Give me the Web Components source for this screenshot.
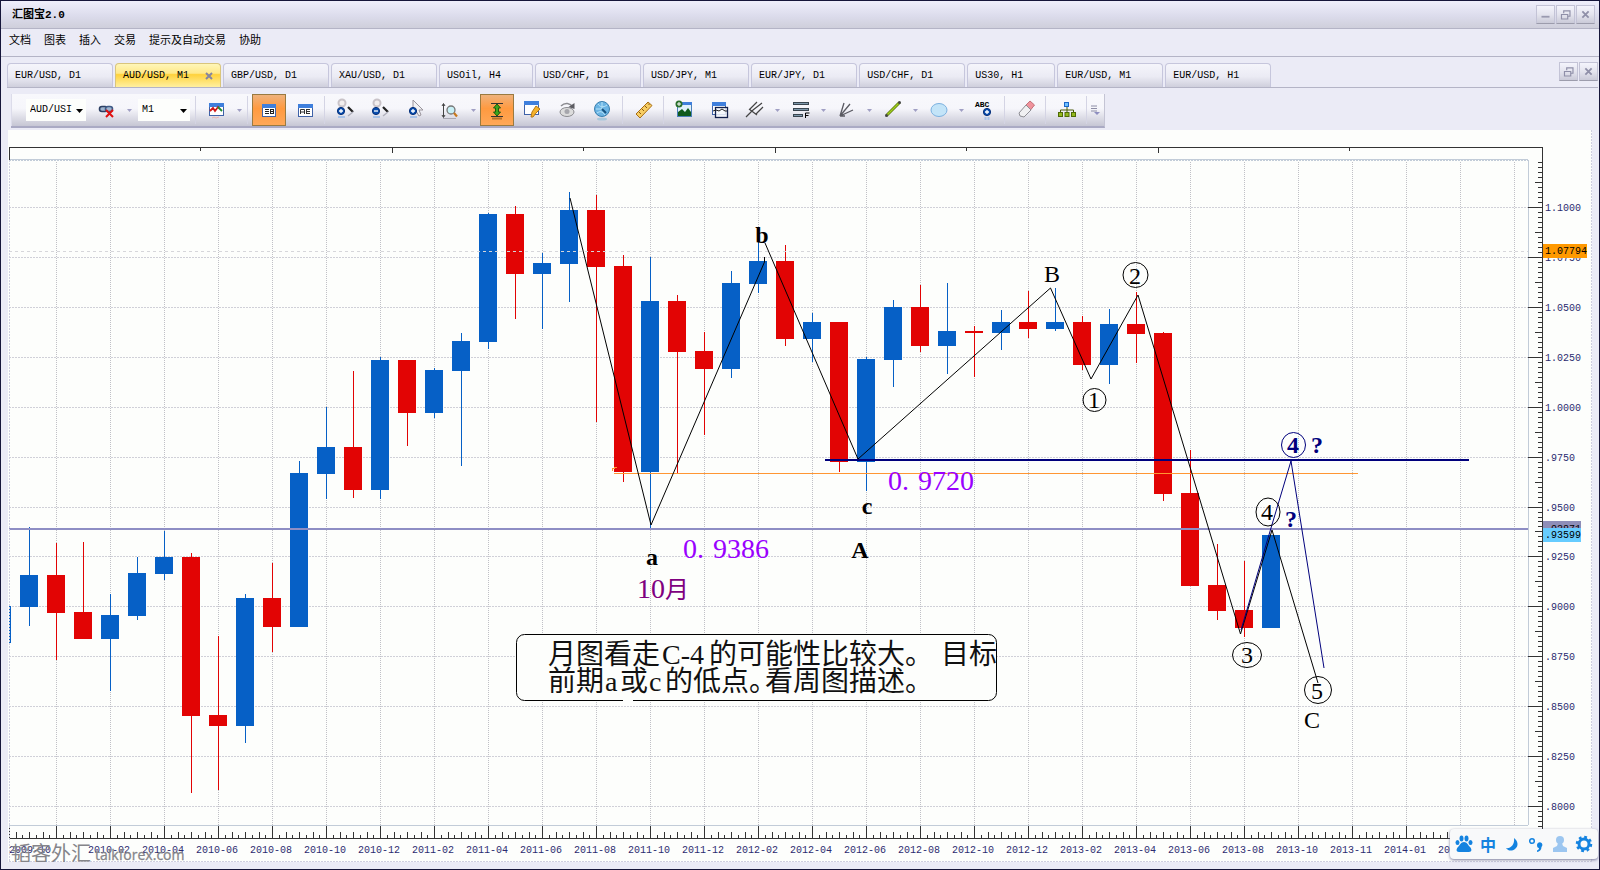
<!DOCTYPE html>
<html lang="zh-CN">
<head>
<meta charset="utf-8">
<title>汇图宝2.0</title>
<style>
  html, body { margin: 0; }
  body {
    font-family: "Liberation Mono", "Noto Sans CJK SC", monospace;
    font-size: 10px;
    color: #000;
    background: #ebebf6;
  }
</style>
</head>
<body>
<trading-app></trading-app>

<script>
/* ---------- helpers ---------- */
const define = (name, html, setup) => {
  const tpl = document.createElement('template');
  tpl.innerHTML = html;
  customElements.define(name, class extends HTMLElement {
    constructor() {
      super();
      this.attachShadow({ mode: 'open' }).append(tpl.content.cloneNode(true));
    }
    connectedCallback() { if (setup) setup.call(this, this.shadowRoot); }
  });
};

/* ---------- toolbar icons, 24 x 24 ---------- */
const win = (x, y, w, h) => `<rect x="${x}.5" y="${y}.5" width="${w}" height="${h}" fill="#fff" stroke="#3f62a8"/><rect x="${x}" y="${y}" width="${w + 1}" height="4" fill="#3f7fdc"/>`;
const plus = (x, y) => `<circle cx="${x}" cy="${y}" r="3.6" fill="#0a4fb0" stroke="#062f78"/><path d="M${x - 2} ${y}h4M${x} ${y - 2}v4" stroke="#fff" stroke-width="1.3"/>`;
const minus = (x, y) => `<circle cx="${x}" cy="${y}" r="3.6" fill="#0a4fb0" stroke="#062f78"/><path d="M${x - 2} ${y}h4" stroke="#fff" stroke-width="1.3"/>`;
const ICONS = {
  link: `<rect x="4.5" y="8.5" width="8" height="5" rx="2.5" fill="#9fb4cf" stroke="#2c3f63" stroke-width="1.6"/><rect x="10.500" y="8.500" width="7" height="5" rx="2.5" fill="#9fb4cf" stroke="#3f5a86" stroke-width="1.6"/><path d="M11 12l7 7M18 12l-7 7" stroke="#e01010" stroke-width="2"/>`,
  chart: win(4, 5, 14, 12) + `<path d="M5 13l3-3 2 3 3-4 1 1" fill="none" stroke="#d01818" stroke-width="1.8"/><path d="M13 9l4 4" stroke="#1f8a2e" stroke-width="1.8"/><path d="M7 20l2-1 2 1 3-1" fill="none" stroke="#e7b3b3"/>`,
  textRight: win(5, 6, 13, 12) + `<path d="M8 11.500h4M8 13.500h4M8 15.500h4" stroke="#222"/><path d="M13.500 11v5M13 11.500h3M13 13.500h3M13 15.500h3M16.500 11v5" stroke="#222"/>`,
  textLeft: win(5, 6, 14, 12) + `<path d="M7.500 16v-4.500h4v4.500M7.500 14h4M13 11.500h4M13 13.500h4M13 15.500h4M13.500 11v5" fill="none" stroke="#333"/>`,
  zoomIn: `<circle cx="8" cy="5" r="3.500" fill="#f2eeee" stroke="#c9c3c8" stroke-width="2"/><path d="M14 9l5 5" stroke="#222" stroke-width="2.2"/><path d="M19 14l-5 4" stroke="#b0b0bc" stroke-width="1.500"/>` + plus(7, 13) + `<path d="M4 19h7" stroke="#a9c3e8" stroke-width="2"/>`,
  zoomOut: `<circle cx="8" cy="5" r="3.500" fill="#f2eeee" stroke="#c9c3c8" stroke-width="2"/><path d="M14 9l5 5" stroke="#222" stroke-width="2.2"/><path d="M19 14l-5 4" stroke="#b0b0bc" stroke-width="1.500"/>` + minus(7, 13) + `<path d="M4 19h7" stroke="#a9c3e8" stroke-width="2"/>`,
  cursor: `<path d="M9 2v14l3-3 3 5 2-1-2-5h4z" fill="#f2f2f4" stroke="#99949c"/>` + plus(9, 13) + `<path d="M6 19h7" stroke="#a9c3e8" stroke-width="2"/>`,
  magnifyY: `<path d="M4.500 6v13M3 8l1.500-2.500L6 8M3 17l1.500 2.500L6 17" fill="none" stroke="#444"/><circle cx="12" cy="12" r="4" fill="#c8f0f6" stroke="#777" stroke-width="1.3"/><path d="M15 15l3 3.500" stroke="#c8791c" stroke-width="2.2"/><path d="M4 20.500h13" stroke="#a8a8b4"/>`,
  range: `<path d="M6 5.500h12M6 18.500h12" stroke="#333"/><path d="M12 6l3.500 4h-2v4h2l-3.500 4-3.500-4h2v-4h-2z" fill="#3da51c" stroke="#1e5b0c"/><path d="M7 20.500h10" stroke="#b4722c" stroke-width="2"/>`,
  brush: win(3, 3, 14, 13) + `<path d="M10 19l1-5 4-6 4 3-4 4-3 4z" fill="#f4b32c" stroke="#b87812"/>`,
  eye: `<ellipse cx="11" cy="14" rx="7" ry="4.500" fill="#dcdcdc" stroke="#8b8b90"/><circle cx="11" cy="13.500" r="2.500" fill="#a6a6ac"/><path d="M5 8c4-4 9-3 12 1" fill="none" stroke="#8b8b90" stroke-width="1.500"/><path d="M18.500 5v6l-6-2z" fill="#5d5d63"/>`,
  globe: `<circle cx="11" cy="11" r="7.500" fill="#6bb4e4" stroke="#3a7fae"/><path d="M11 4v7M5 11h6M7 6c2 3 5 4 9 1M6 15c3-2 5-2 8 2" stroke="#b9e4f8" fill="none"/><path d="M11 11l4 4" stroke="#17527f" stroke-width="2"/><ellipse cx="11" cy="21" rx="5" ry="1.500" fill="#a9c8dc"/>`,
  ruler: `<path d="M4 16L16 4l4 3.500L8 20z" fill="#f7cd63" stroke="#a86e14"/><path d="M7 14l2 2M10 11l2 2M13 8l2 2M16 5.500l1.500 1.500" stroke="#8a5a10"/>`,
  picture: `<rect x="4.500" y="5.500" width="14" height="13" fill="#dff0fb" stroke="#4a7fb8"/><path d="M4 5.500h15" stroke="#3f7fdc" stroke-width="3"/><path d="M5 18v-4l4-3 3 3 3-4 3 4v4z" fill="#0f5a1c"/><circle cx="6" cy="6" r="3.500" fill="#2a6f2c"/><path d="M4 6h4M6 4v4" stroke="#fff"/>`,
  windows: win(4, 4, 13, 12) + `<rect x="7.500" y="9.500" width="12" height="10" fill="#f4f7fc" fill-opacity=".85" stroke="#12204c" stroke-width="1.3"/><path d="M5 13l3-1 3 1 3-2 3 2h2" fill="none" stroke="#222"/>`,
  fork: `<path d="M3 19L10 12M6 11l8 6M7 11l7-7M10 12l9-7M13 16l7-7" fill="none" stroke="#444" stroke-width="1.200"/>`,
  fibo: `<path d="M4 5.500h16M4 11.500h16M4 17.500h10" stroke="#39454f" stroke-width="3"/><path d="M5 5.500h14M5 11.500h14M5 17.500h8" stroke="#7d98ab"/><path d="M16.500 20v-5h4M16.500 17.500h3" fill="none" stroke="#000"/>`,
  fan: `<path d="M5 18L9 5M5 18l10-12M5 18l13-6M5 18h5" stroke="#5a5a62" stroke-width="1.300" fill="none"/>`,
  line: `<path d="M5.500 17.500L18.500 4.500" stroke="#5a7a0c" stroke-width="3"/><path d="M5.500 17.500L18.500 4.500" stroke="#a2cf1c" stroke-width="1.4"/><circle cx="5.500" cy="17.500" r="1.500" fill="#444"/><circle cx="18.500" cy="4.500" r="1.500" fill="#444"/>`,
  ellipse: `<ellipse cx="12" cy="12" rx="8" ry="6.500" fill="#c3e4f8" stroke="#7bb1e0"/>`,
  label: `<text x="2" y="9" font-family="Liberation Mono, monospace" font-size="8" font-weight="700">ABC</text>` + plus(14, 14) + `<path d="M12.500 19v3M15.500 19v3" stroke="#a9c3e8" stroke-width="2"/>`,
  eraser: `<path d="M12 7l4-4 4.500 4-4 5z" fill="#f0929c" stroke="#c47078"/><path d="M12 7l-7 8 1 3 4 1 7-7z" fill="#f0f0f2" stroke="#8e8e94"/>`,
  tree: `<path d="M12 8v4M5.500 15v-3h13v3M12 12v3" stroke="#4a5a08" fill="none"/><rect x="9.500" y="4.500" width="4" height="4" fill="#6fc0ff" stroke="#1b66c8"/><rect x="3.500" y="14.500" width="4" height="4" fill="#93b81c" stroke="#4e6a06"/><rect x="10" y="14.500" width="4" height="4" fill="#93b81c" stroke="#4e6a06"/><rect x="16.500" y="14.500" width="4" height="4" fill="#93b81c" stroke="#4e6a06"/>`
};

/* ---------- window control ---------- */
const GLYPHS = {
  min: '<path d="M5 12h9" stroke="#9a9ab0" stroke-width="2"/>',
  restore: '<path d="M7.500 8V5.500h7v6H12M5 9.500h7v5H5z" fill="none" stroke="#8f8fa8" stroke-width="1.300"/>',
  close: '<path d="M6 6l7 7M13 6l-7 7" stroke="#8f8fa8" stroke-width="2"/>'
};
define('window-control', `
<style>
  :host { display: block; width: 19px; height: 19px; }
  button { display: block; width: 100%; height: 100%; padding: 0; border: 1px solid #c3c3d6; border-bottom-color: #9c9cac; background: linear-gradient(#f4f4fc, #e4e4ee 50%, #cacad8); }
  svg { display: block; width: 100%; height: 100%; }
</style>
<button type="button"><svg viewBox="0 0 19 19"></svg></button>`, function (root) {
  root.querySelector('svg').innerHTML = GLYPHS[this.getAttribute('kind')];
  root.querySelector('button').setAttribute('aria-label', this.getAttribute('label'));
});

/* ---------- title bar ---------- */
define('title-bar', `
<style>
  :host { display: flex; align-items: center; justify-content: space-between; height: 27px; padding: 0 4px 0 11px; border-bottom: 1px solid #b4b4c6; background: linear-gradient(#efeffb, #dcdcec 55%, #cfcfdb); }
  h1 { margin: 0; font-size: 11px; line-height: 16px; font-weight: 700; }
  div { display: flex; gap: 1px; }
</style>
<h1><slot></slot></h1>
<div>
  <window-control kind="min" label="最小化"></window-control>
  <window-control kind="restore" label="还原"></window-control>
  <window-control kind="close" label="关闭"></window-control>
</div>`);

/* ---------- menu bar ---------- */
define('menu-bar', `
<style>
  :host { display: block; border-bottom: 1px solid #b4b4c6; background: #ebebf6; }
  nav { display: flex; gap: 13px; height: 27px; padding: 0 8px 3px; box-sizing: border-box; align-items: center; }
  button { padding: 0; border: 0; background: none; font: 11px/16px "Liberation Mono", "Noto Sans CJK SC", monospace; color: #000; white-space: nowrap; }
</style>
<nav></nav>`, function (root) {
  root.querySelector('nav').innerHTML = this.getAttribute('items').split('|')
    .map(t => `<button type="button">${t}</button>`).join('');
});

/* ---------- chart tabs ---------- */
define('chart-tab', `
<style>
  :host { display: block; }
  button { display: flex; align-items: center; height: 24px; padding: 0 31px 0 7px; box-sizing: border-box; border: 1px solid #c6c6dc; border-bottom: 0; border-radius: 4px 4px 0 0; background: linear-gradient(#f5f5fb, #ebebf4 55%, #cfcfdc); font: 10px/16px "Liberation Mono", monospace; color: #000; white-space: pre; position: relative; }
  :host([active]) button { background: linear-gradient(#fff6b8, #ffe98a 40%, #ffd23c 46%, #fff0a0); border-color: #d9c57c; }
  svg { display: none; position: absolute; right: 7px; top: 8px; width: 8px; height: 8px; }
  :host([active]) svg { display: block; }
</style>
<button type="button" role="tab"><slot></slot><svg viewBox="0 0 8 8"><path d="M1 1l6 6M7 1l-6 6" stroke="#8585a0" stroke-width="2"/></svg></button>`, function (root) {
  root.querySelector('button').setAttribute('aria-selected', this.hasAttribute('active'));
});
define('tab-strip', `
<style>
  :host { display: flex; align-items: flex-end; justify-content: space-between; height: 30px; margin: 0 1px 0 6px; border-bottom: 1px solid #b4b4c6; }
  .tabs { display: flex; gap: 2px; }
  .controls { display: flex; gap: 1px; align-self: flex-start; padding-top: 5px; }
</style>
<div class="tabs" role="tablist"><slot></slot></div>
<div class="controls">
  <window-control kind="restore" label="还原图表"></window-control>
  <window-control kind="close" label="关闭图表"></window-control>
</div>`);

/* ---------- toolbar parts ---------- */
define('tool-button', `
<style>
  :host { display: flex; flex: none; }
  button { display: flex; align-items: center; justify-content: center; width: 35px; height: 32px; padding: 0; border: 0; background: none; box-sizing: border-box; color: #000; }
  :host([pressed]) { padding: 0 1px; }
  :host([pressed]) button { width: 34px; border: 1px solid #9a7a40; background: linear-gradient(#efb27c, #ff9a40 45%, #ffa858); }
  .icon svg { width: 24px; height: 24px; display: block; }
  .more { width: 11px; display: none; }
  .more svg { width: 5px; height: 3px; display: block; }
  :host([menu]) .more { display: flex; }
</style>
<button class="icon" type="button"><svg viewBox="0 0 24 24"></svg></button>
<button class="more" type="button" aria-label="更多"><svg viewBox="0 0 5 3"><path d="M0 0h5L2.500 3z" fill="#a09fc4"/></svg></button>`, function (root) {
  root.querySelector('.icon svg').innerHTML = ICONS[this.getAttribute('icon')];
  root.querySelector('.icon').setAttribute('aria-label', this.getAttribute('icon'));
});
define('tool-select', `
<style>
  :host { display: flex; flex: none; position: relative; height: 22px; background: #fdfefc; }
  select { appearance: none; width: 100%; height: 100%; border: 0; padding: 0 14px 0 4px; background: transparent; font: 10px/16px "Liberation Mono", monospace; color: #000; }
  svg { position: absolute; right: 3px; top: 10px; width: 7px; height: 4px; pointer-events: none; }
</style>
<select></select>
<svg viewBox="0 0 7 4"><path d="M0 0h7L3.500 4z"/></svg>`, function (root) {
  const s = root.querySelector('select');
  s.setAttribute('aria-label', this.getAttribute('label'));
  s.innerHTML = `<option>${this.getAttribute('value')}</option>`;
});
define('tool-separator', `
<style>
  :host { display: block; flex: none; width: 6px; height: 28px; }
  i { display: block; width: 1px; height: 100%; margin-left: 2px; background: #d4d4e4; }
</style><i></i>`);
define('tool-bar', `
<style>
  :host { display: flex; align-items: flex-start; padding: 6px 0 2px 10px; }
  .bar { display: flex; align-items: center; height: 34px; box-sizing: border-box; border-bottom: 2px solid #aaaac4; border-right: 1px solid #c4c4d4; background: linear-gradient(#f8f8fc, #f6f6fb 45%, #c6c6d4); }
  .grip { width: 15px; align-self: stretch; box-sizing: border-box; border-left: 1px solid #dcdcea; }
  .symbol { width: 60px; margin-right: 3px; }
  .period { width: 52px; margin: 0 3px; }
  .end { width: 14px; height: 100%; padding: 0; border: 0; background: none; }
  .end svg { display: block; width: 10px; height: 10px; }
</style>
<div class="bar" role="toolbar">
  <span class="grip"></span>
  <tool-select class="symbol" label="品种" value="AUD/USI"></tool-select>
  <tool-button icon="link" menu></tool-button>
  <tool-select class="period" label="周期" value="M1"></tool-select>
  <tool-separator></tool-separator>
  <tool-button icon="chart" menu></tool-button>
  <tool-separator></tool-separator>
  <tool-button icon="textRight" pressed></tool-button>
  <tool-button icon="textLeft"></tool-button>
  <tool-separator></tool-separator>
  <tool-button icon="zoomIn"></tool-button>
  <tool-button icon="zoomOut"></tool-button>
  <tool-button icon="cursor"></tool-button>
  <tool-button icon="magnifyY" menu></tool-button>
  <tool-button icon="range" pressed></tool-button>
  <tool-button icon="brush"></tool-button>
  <tool-button icon="eye"></tool-button>
  <tool-button icon="globe"></tool-button>
  <tool-separator></tool-separator>
  <tool-button icon="ruler"></tool-button>
  <tool-separator></tool-separator>
  <tool-button icon="picture"></tool-button>
  <tool-button icon="windows"></tool-button>
  <tool-button icon="fork" menu></tool-button>
  <tool-button icon="fibo" menu></tool-button>
  <tool-button icon="fan" menu></tool-button>
  <tool-button icon="line" menu></tool-button>
  <tool-button icon="ellipse" menu></tool-button>
  <tool-button icon="label"></tool-button>
  <tool-separator></tool-separator>
  <tool-button icon="eraser"></tool-button>
  <tool-separator></tool-separator>
  <tool-button icon="tree"></tool-button>
  <tool-separator></tool-separator>
  <button class="end" type="button" aria-label="工具栏选项"><svg viewBox="0 0 10 10"><path d="M1 1h6M1 3.500h6M1 6h6" stroke="#8e8ea6"/><path d="M4 7h6L7 10z" fill="#8e8ec0"/></svg></button>
</div>`);

/* ---------- price chart ---------- */
/* month index from 2009-12, direction, high, body top, body bottom, low */
const CANDLES = [
  [-2,'u',606,606,643,643],[-1,'u',527,575,607,626],[0,'d',543,575,613,660],[1,'d',542,612,639,639],
  [2,'u',594,615,639,691],[3,'u',557,573,616,620],[4,'u',531,557,574,580],[5,'d',553,557,716,793],
  [6,'d',636,715,726,790],[7,'u',594,598,726,743],[8,'d',563,598,627,652],[9,'u',461,473,627,627],
  [10,'u',407,447,474,499],[11,'d',371,447,490,498],[12,'u',357,360,490,499],[13,'d',360,360,413,446],
  [14,'u',368,370,413,418],[15,'u',333,341,371,466],[16,'u',213,214,342,349],[17,'d',206,214,274,319],
  [18,'u',253,263,274,329],[19,'u',192,210,264,302],[20,'d',195,210,267,422],[21,'d',255,266,472,482],
  [22,'u',257,301,472,528],[23,'d',295,301,352,473],[24,'d',332,351,369,435],[25,'u',271,283,369,378],
  [26,'u',240,261,284,293],[27,'d',245,261,339,346],[28,'u',313,322,339,362],[29,'d',322,322,462,472],
  [30,'u',357,359,462,491],[31,'u',300,307,360,387],[32,'d',285,307,346,352],[33,'u',283,331,346,374],
  [34,'d',326,331,333,377],[35,'u',310,322,333,350],[36,'d',291,322,329,338],[37,'u',288,322,329,331],
  [38,'d',316,322,365,370],[39,'u',309,324,365,384],[40,'d',292,324,334,363],[41,'d',332,333,494,501],
  [42,'d',450,493,586,586],[43,'d',544,585,611,620],[44,'d',561,610,628,637],[45,'u',535,535,628,628]
];
const PRICES = ['1.1000','1.0750','1.0500','1.0250','1.0000','.9750','.9500','.9250','.9000','.8750','.8500','.8250','.8000'];
const DATES = ['2010-02','2010-04','2010-06','2010-08','2010-10','2010-12','2011-02','2011-04','2011-06','2011-08','2011-10','2011-12','2012-02','2012-04','2012-06','2012-08','2012-10','2012-12','2013-02','2013-04','2013-06','2013-08','2013-10','2013-11','2014-01','2014-03'];
const monthX = i => 56 + 27 * i;
const priceY = i => Math.round(207 + 49.92 * i);

define('candle-chart', `
<style>
  :host { display: block; background: #fdfefc; }
  svg { display: block; width: 100%; height: auto; }
  text { white-space: pre; }
  .axis text { font: 10px "Liberation Mono", monospace; fill: #2c2c70; }
  .grid path { stroke: #c0c0c6; stroke-dasharray: 1 1; }
  .grid .h { stroke-dasharray: 2 1; stroke: #d0d0d8; }
  .u { fill: #0660c6; }
  .d { fill: #e20404; }
  .wave { fill: none; stroke: #000; }
  .alt { fill: none; stroke: #00007c; }
  .mark text { font: 24px "Liberation Serif", serif; text-anchor: middle; }
  .mark .strong text { font-weight: 700; }
  .value text { font: 28px "Liberation Serif", "Noto Sans CJK SC", serif; fill: #9900ff; }
  .value .month { fill: #800080; }
  .note text { font: 28px "Liberation Serif", "Noto Sans CJK SC", serif; fill: #111; }
  .brand { fill: #85858a; }
</style>
<svg viewBox="8 130 1584 732" role="img" aria-label="AUD/USD M1">
  <g class="grid" shape-rendering="crispEdges"></g>
  <g class="candles" shape-rendering="crispEdges"></g>
  <g class="levels" shape-rendering="crispEdges">
    <path d="M9 251.500H1528" stroke="#d6d6da" stroke-dasharray="3 3"/>
    <rect x="9" y="528" width="1519" height="2" fill="#8e8ec4"/>
    <rect x="614" y="473" width="744" height="1" fill="#ff9633"/>
    <path d="M612.500 471v-2l4-2" stroke="#ff9633" fill="none"/>
    <rect x="825" y="459" width="644" height="2" fill="#00007c"/>
  </g>
  <path class="wave" d="M570 198L651 525L764.500 262V257M765 243L858 459L1050.500 288L1091 379L1138 295L1240.500 634L1272 530L1318 683"/>
  <path class="alt" d="M1241 630L1271 528L1291 461L1324 668"/>
  <g class="axis" shape-rendering="crispEdges"></g>
  <g class="mark">
    <g fill="none" stroke="#000">
      <circle cx="1135.500" cy="275" r="12.500"/><circle cx="1094.500" cy="400" r="11.500"/>
      <ellipse cx="1268" cy="512" rx="12" ry="14"/><ellipse cx="1247" cy="655" rx="14.500" ry="12.500"/>
      <circle cx="1318" cy="690" r="13.500"/><ellipse cx="1293.500" cy="445" rx="12" ry="12.500" stroke="#00007c"/>
    </g>
    <g class="strong"><text x="762" y="243">b</text><text x="652" y="565">a</text><text x="867" y="514">c</text><text x="860" y="558">A</text></g>
    <text x="1052" y="282">B</text><text x="1312" y="728">C</text>
    <text x="1094" y="408">1</text><text x="1135" y="284">2</text><text x="1247" y="663">3</text>
    <text x="1267" y="520">4</text><text x="1317" y="699">5</text>
    <g class="strong" fill="#00007c"><text x="1293" y="453">4</text><text x="1317" y="453">?</text><text x="1291" y="527">?</text></g>
  </g>
  <g class="value">
    <text y="558"><tspan x="683">0.</tspan><tspan x="713">9386</tspan></text>
    <text y="490"><tspan x="888">0.</tspan><tspan x="918">9720</tspan></text>
    <text class="month" x="637" y="598">10<tspan font-size="24">月</tspan></text>
  </g>
  <g class="note">
    <rect x="516.500" y="634.500" width="480" height="66" rx="8" fill="#fdfefc" stroke="#000"/>
    <path d="M623 700.500h10" stroke="#fdfefc" stroke-width="2"/>
    <text y="664"><tspan x="548">月图看走</tspan><tspan x="662">C-4</tspan><tspan x="709">的可能性比较大。</tspan><tspan x="941">目标</tspan></text>
    <text y="691"><tspan x="548">前期</tspan><tspan x="605">a</tspan><tspan x="620">或</tspan><tspan x="649">c</tspan><tspan x="665">的低点。</tspan><tspan x="765">看周图描述。</tspan></text>
  </g>
  <g class="brand">
    <text x="11" y="861" font-family="Noto Sans CJK SC, sans-serif" font-size="20">韬客外汇</text>
    <text x="95" y="860" font-family="Open Sans, sans-serif" font-size="14" stroke="#85858a" stroke-width=".3">talkforex.com</text>
  </g>
</svg>`, function (root) {
  let grid = '';
  for (let i = 0; i < 13; i++) grid += `<path class="h" d="M9 ${priceY(i)}.5H1528"/>`;
  for (let i = 0; i <= 54; i += 2) grid += `<path d="M${monthX(i)}.5 162V825"/>`;
  root.querySelector('.grid').innerHTML = grid;

  root.querySelector('.candles').innerHTML = CANDLES.map(([i, c, hi, top, bot, lo]) => {
    const x = monthX(i);
    const left = Math.max(9, x - 9), right = x + 9;
    return `<g class="${c}"><rect x="${x}" y="${hi}" width="${x < 9 ? 0 : 1}" height="${lo - hi}"/><rect x="${left}" y="${top}" width="${right - left}" height="${bot - top}"/></g>`;
  }).join('');

  let axis = '<path d="M9 159.500H1528M1528.500 160V825M9 825.500H1528" fill="none" stroke="#c2ccd8"/>' +
    '<path d="M9 160.500H1528" fill="none" stroke="#c2ccd8" stroke-dasharray="2 1"/>' +
    '<path d="M9.500 160V147.500H1542.500V829M9 838.500H1500" fill="none" stroke="#333"/><path d="M9.500 826v12" stroke="#333"/>' +
    '<path d="M9.500 160V862M1591.500 130V862M9 861.500H1592" fill="none" stroke="#cfcfe0" stroke-dasharray="2 1"/>';
  [[200,4],[392,6],[583,4],[775,6],[966,4],[1158,6],[1349,4]].forEach(([x, h]) => axis += `<path d="M${x}.5 147v${h}" stroke="#333"/>`);
  for (let n = -6; n < 208; n++) {
    const x = Math.round(56 + 6.75 * n);
    if (x < 12) continue;
    const h = n % 8 === 0 ? 12 : n % 2 === 0 ? 6 : 3;
    axis += `<path d="M${x}.5 838v-${h}" stroke="#333"/>`;
  }
  for (let n = -9; n < 125; n++) {
    const y = Math.round(207 + 4.992 * n);
    const w = n % 10 === 0 ? 14 : n % 5 === 0 ? 7 : 4;
    axis += `<path d="M1542 ${y}.5h-${w}" stroke="#333"/>`;
  }
  PRICES.forEach((p, i) => axis += `<text x="1545" y="${priceY(i) + 4}">${p}</text>`);
  axis += '<rect x="1543" y="244" width="44" height="14" fill="#ff9900"/><text x="1545" y="254" style="fill:#000">1.07794</text>';
  axis += '<rect x="1543" y="521" width="38" height="9" fill="#8e8eb8"/><text x="1545" y="532" style="fill:#000">.93871</text>';
  axis += '<rect x="1543" y="528" width="38" height="14" fill="#66ccff"/><text x="1545" y="538" style="fill:#000">.93599</text>';
  axis += '<text x="9" y="853">2009-10</text>';
  DATES.forEach((d, i) => axis += `<text x="${88 + 54 * i}" y="853">${d}</text>`);
  root.querySelector('.axis').innerHTML = axis;
});

/* ---------- input method tray ---------- */
define('ime-tray', `
<style>
  :host { display: flex; align-items: center; justify-content: space-between; width: 148px; height: 30px; padding: 0 4px; box-sizing: border-box; border-radius: 4px; background: #f8f9fa; box-shadow: 0 1px 3px #77779a; }
  button { width: 20px; height: 24px; padding: 0; border: 0; background: none; color: #1483e0; font: 700 16px/24px "Noto Sans CJK SC", sans-serif; }
  svg { display: block; width: 20px; height: 20px; fill: #1483e0; }
</style>
<button type="button" aria-label="输入法"><svg viewBox="0 0 20 20"><ellipse cx="3.500" cy="8.500" rx="2" ry="2.500"/><ellipse cx="7.500" cy="4.500" rx="2" ry="3"/><ellipse cx="12.500" cy="4.500" rx="2" ry="3"/><ellipse cx="16.500" cy="8.500" rx="2" ry="2.500"/><path d="M10 8c3 0 4 3 6 5s2 5-1 5H5c-3 0-3-3-1-5s3-5 6-5z"/></svg></button>
<button type="button">中</button>
<button type="button" aria-label="半角"><svg viewBox="0 0 20 20"><path d="M12 4c4 3 5 8 1 11-3 2.500-7 2-9-1 4 1 9-3 8-10z"/></svg></button>
<button type="button" aria-label="标点"><svg viewBox="0 0 20 20"><circle cx="6" cy="7" r="2.300" fill="none" stroke="#1483e0" stroke-width="1.500"/><path d="M11 11a2.700 2.700 0 1 1 4.500 2c0 3-2 4.500-4.500 5v-1.500c1.500-.5 2-1.500 2-2.500-1.300 0-2-1-2-3z"/></svg></button>
<button type="button" aria-label="账户"><svg viewBox="0 0 20 20" style="fill:#9cc6f0"><circle cx="10" cy="6" r="4"/><path d="M8 9h4l1 3 4 2v4H3v-4l4-2z"/></svg></button>
<button type="button" aria-label="设置"><svg viewBox="0 0 20 20"><circle cx="10" cy="10" r="5" fill="none" stroke="#1483e0" stroke-width="3"/><circle cx="10" cy="10" r="7" fill="none" stroke="#1483e0" stroke-width="2.500" stroke-dasharray="2.750 2.750"/></svg></button>`);

/* ---------- application frame ---------- */
define('trading-app', `
<style>
  :host { display: block; position: relative; min-height: 100vh; box-sizing: border-box; border: 1px solid #16163a; background: #ebebf6; }
  main { margin: 0 7px 7px; }
  ime-tray { position: absolute; right: 1px; bottom: 10px; }
</style>
<title-bar>汇图宝2.0</title-bar>
<menu-bar items="文档|图表|插入|交易|提示及自动交易|协助"></menu-bar>
<tab-strip>
  <chart-tab>EUR/USD, D1</chart-tab>
  <chart-tab active>AUD/USD, M1</chart-tab>
  <chart-tab>GBP/USD, D1</chart-tab>
  <chart-tab>XAU/USD, D1</chart-tab>
  <chart-tab>USOil, H4</chart-tab>
  <chart-tab>USD/CHF, D1</chart-tab>
  <chart-tab>USD/JPY, M1</chart-tab>
  <chart-tab>EUR/JPY, D1</chart-tab>
  <chart-tab>USD/CHF, D1</chart-tab>
  <chart-tab>US30, H1</chart-tab>
  <chart-tab>EUR/USD, M1</chart-tab>
  <chart-tab>EUR/USD, H1</chart-tab>
</tab-strip>
<tool-bar></tool-bar>
<main><candle-chart></candle-chart></main>
<ime-tray></ime-tray>`);
</script>
</body>
</html>
